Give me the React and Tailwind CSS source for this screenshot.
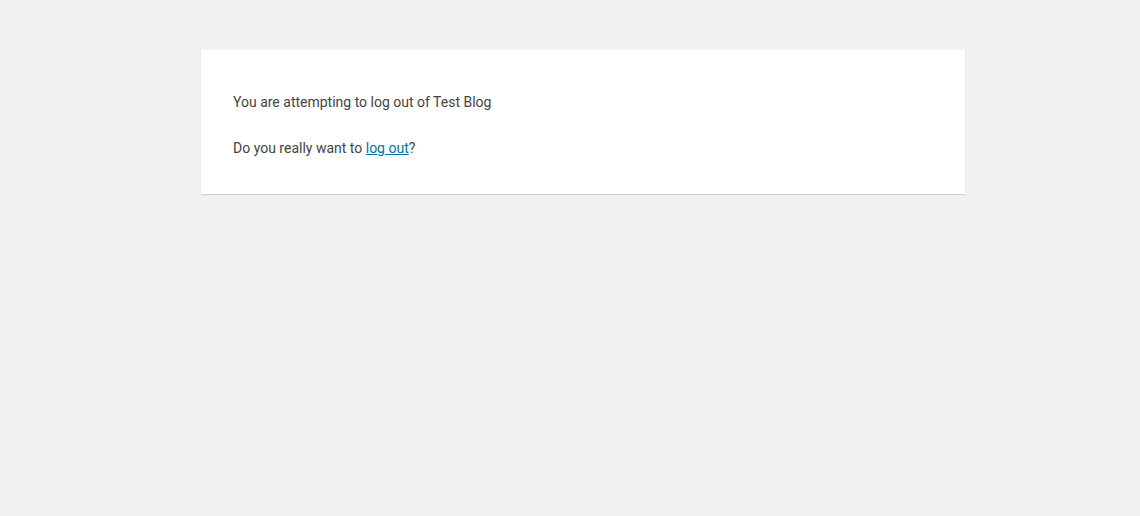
export default function App() {
  return (
    <div className="min-h-[516px] bg-[#f1f1f1] pt-[50px] font-['Roboto',sans-serif] text-[#444]">
      <div className="ml-[201px] w-[764px] bg-white px-8 pt-[17px] pb-[15px] shadow-[0_1px_1px_rgba(0,0,0,0.13)]">
        <p className="mt-[25px] mb-[20px] text-[14px] leading-[21px]">You are attempting to log out of Test Blog</p>
        <p className="mt-[25px] mb-[20px] text-[14px] leading-[21px]">
          Do you really want to{' '}
          <a href="#" className="text-[#0073aa] underline">log out</a>?
        </p>
      </div>
    </div>
  );
}
